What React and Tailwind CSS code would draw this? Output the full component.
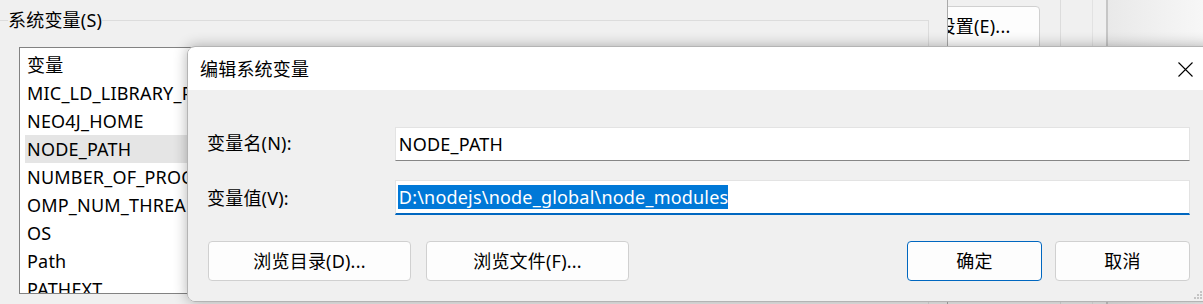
const vars = [
  "MIC_LD_LIBRARY_PATH",
  "NEO4J_HOME",
  "NODE_PATH",
  "NUMBER_OF_PROCESSORS",
  "OMP_NUM_THREADS",
  "OS",
  "Path",
  "PATHEXT",
];

const Button = ({ children, primary, className = "" }) => (
  <button
    className={`h-[40px] rounded-[4px] border bg-[#fdfdfd] leading-[24px] text-black ${
      primary ? "border-[#0067c0]" : "border-[#d0d0d0]"
    } ${className}`}
  >
    {children}
  </button>
);

export default function App() {
  return (
    <div className="relative w-[1203px] h-[304px] overflow-hidden bg-[#f0f0f0] text-black text-[18px] tracking-[0.2px] font-['Noto_Sans','Noto_Sans_CJK_SC',sans-serif]">
      {/* background window */}
      <div className="flex h-full">
        <div className="w-[948px] h-full border-r border-[#a9a9a9] overflow-hidden">
          <fieldset className="-ml-[1px] mt-[8px] w-[930px] h-[340px] border border-[#dcdcdc]">
            <legend className="ml-[8px] p-0 leading-[24px]">系统变量(S)</legend>
            <div className="ml-[19px] mt-[15px] w-[420px] h-[247px] border border-[#828282] bg-white overflow-hidden pt-[3px]">
              <div className="h-[28px] pl-[7px] leading-[28px]">变量</div>
              {vars.map((v) => (
                <div
                  key={v}
                  className={`h-[28px] ml-[5px] pl-[2px] leading-[28px] whitespace-nowrap ${
                    v === "NODE_PATH" ? "bg-[#e5e5e5]" : ""
                  }`}
                >
                  {v}
                </div>
              ))}
            </div>
          </fieldset>
        </div>
        <div className="flex-1 flex h-full overflow-hidden">
          <div className="w-[112px] shrink-0 pt-[6px]">
            <Button className="-ml-[40px] w-[132px] h-[60px] pb-[20px]">设置(E)...</Button>
          </div>
          <div className="w-[32px] shrink-0 border-l border-[#dcdcdc]" />
          <div className="w-[14px] shrink-0 border-l border-[#e2e2e2]" />
          <div className="flex-1 border-l-2 border-[#c6c6c6] bg-gradient-to-r from-[#e9e9e9] to-[#f7f7f7]" />
        </div>
      </div>

      {/* dialog */}
      <div className="absolute left-[187px] top-[46px] w-[1030px] h-[256px] rounded-[8px] overflow-hidden border border-[#b4b4b4] shadow-[0_0_14px_rgba(0,0,0,0.3)] flex flex-col">
        <div className="h-[43px] bg-white flex items-center justify-between pl-[12px] pr-[23px]">
          <span className="leading-[24px]">编辑系统变量</span>
          <svg width="15" height="15" viewBox="0 0 15 15" className="mt-[1px]">
            <path d="M0.5 0.5 L14.5 14.5 M14.5 0.5 L0.5 14.5" stroke="#000" strokeWidth="1.1" fill="none" />
          </svg>
        </div>
        <div className="relative flex-1 bg-[#f0f0f0] pl-[19px] pr-[26px] pt-[37px]">
          <div className="flex items-center h-[34px]">
            <span className="w-[188px] leading-[24px] -mt-[3px]">变量名(N):</span>
            <div className="w-[796px] h-[34px] bg-white border border-[#e3e3e3] border-b-[#868686] pl-[3px] flex items-center leading-[24px]">
              NODE_PATH
            </div>
          </div>
          <div className="flex items-center h-[35px] mt-[19px]">
            <span className="w-[188px] leading-[24px]">变量值(V):</span>
            <div className="w-[796px] h-[35px] bg-white border border-[#e3e3e3] border-b-2 border-b-[#0067c0] pl-[2px] flex items-center">
              <span className="bg-[#0078d7] text-white leading-[24px] pl-[1px]">
                D:\nodejs\node_global\node_modules
              </span>
            </div>
          </div>
          <div className="flex mt-[26px]">
            <Button className="ml-[1px] w-[203px]">浏览目录(D)...</Button>
            <Button className="ml-[15px] w-[203px]">浏览文件(F)...</Button>
            <Button primary className="ml-auto w-[135px]">确定</Button>
            <Button className="ml-[13px] w-[135px]">取消</Button>
          </div>
          <svg className="absolute right-[14px] bottom-[2px]" width="8" height="8" viewBox="0 0 8 8">
            <rect x="6" y="0" width="2" height="2" fill="#c4c4c4" />
            <rect x="3" y="3" width="2" height="2" fill="#c4c4c4" />
            <rect x="6" y="3" width="2" height="2" fill="#c4c4c4" />
            <rect x="0" y="6" width="2" height="2" fill="#c4c4c4" />
            <rect x="3" y="6" width="2" height="2" fill="#c4c4c4" />
            <rect x="6" y="6" width="2" height="2" fill="#c4c4c4" />
          </svg>
        </div>
      </div>
    </div>
  );
}
